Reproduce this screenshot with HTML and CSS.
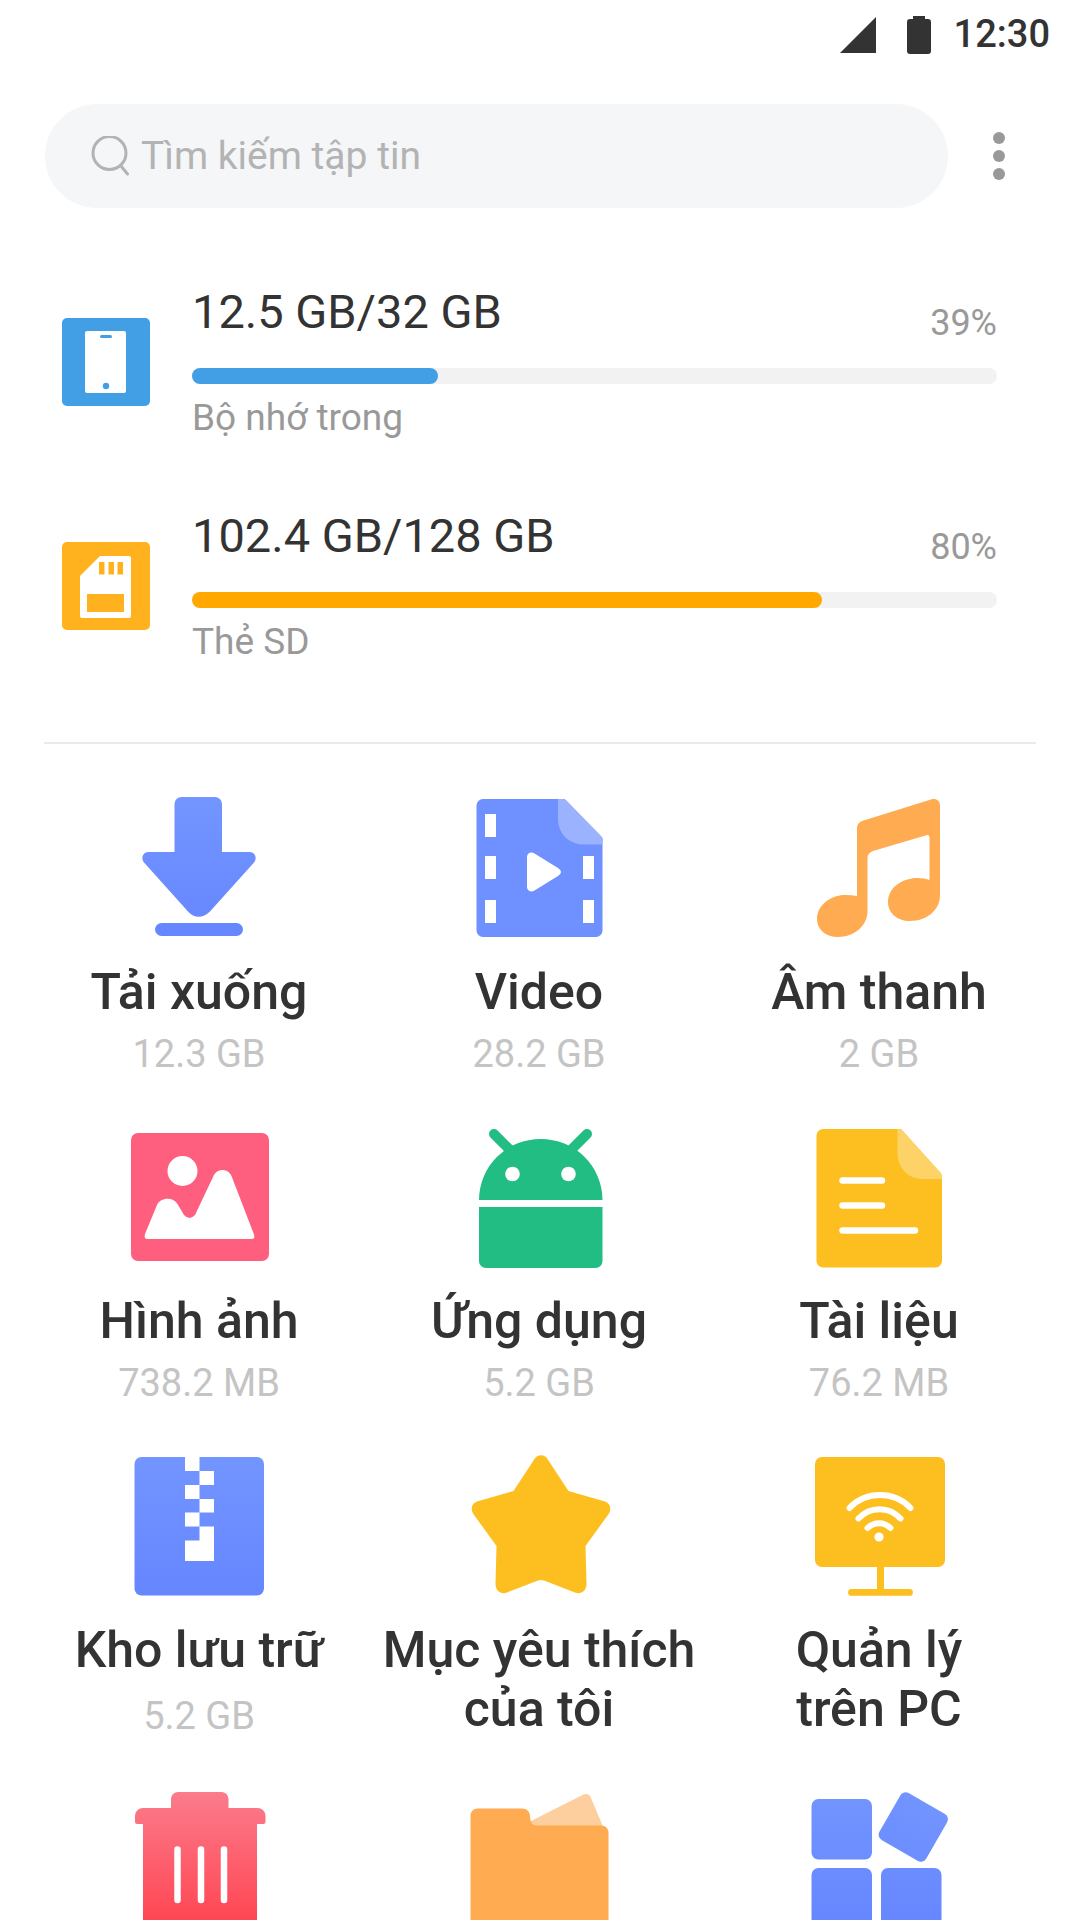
FILE: index.html
```html
<!DOCTYPE html>
<html lang="vi">
<head>
  <meta charset="utf-8">
  <meta name="viewport" content="width=device-width, initial-scale=1">
  <title>Quản lý tập tin</title>
  <link rel="stylesheet" href="styles.css">
</head>
<body>
  <div class="app">
    <div class="status-bar">
      <svg class="status-signal" viewBox="0 0 36 36" aria-hidden="true"><path d="M36 0V36H0z"/></svg>
      <svg class="status-battery" viewBox="0 0 24 40" aria-hidden="true"><path d="M6 1h12v3h3a3 3 0 0 1 3 3v29a3 3 0 0 1-3 3H3a3 3 0 0 1-3-3V7a3 3 0 0 1 3-3h3z"/></svg>
      <time class="status-time">12:30</time>
    </div>

    <header class="toolbar">
      <label class="search">
        <svg class="search-icon" viewBox="0 0 40 40" aria-hidden="true"><circle cx="18.500" cy="17" r="16.500"/><path d="M30 30l6.500 8"/></svg>
        <input class="search-input" type="search" placeholder="Tìm kiếm tập tin" aria-label="Tìm kiếm tập tin">
      </label>
      <button class="menu-button" type="button" aria-label="Menu">
        <svg class="menu-icon" viewBox="0 0 12 48" aria-hidden="true"><circle cx="6" cy="6" r="6"/><circle cx="6" cy="24" r="6"/><circle cx="6" cy="42" r="6"/></svg>
      </button>
    </header>

    <main>
      <section class="storage-list">
        <div class="storage">
          <svg class="storage-icon" viewBox="0 0 88 88" aria-hidden="true">
            <rect width="88" height="88" rx="5" fill="#429fe5"/>
            <rect x="23" y="13" width="41" height="62" rx="2" fill="#fff"/>
            <rect x="38" y="17" width="12" height="3" rx="1.5" fill="#429fe5"/>
            <circle cx="44" cy="68" r="3.2" fill="#429fe5"/>
          </svg>
          <div class="storage-body">
            <div class="storage-head">
              <span class="storage-usage">12.5 GB/32 GB</span>
              <span class="storage-percent">39%</span>
            </div>
            <div class="meter"><div class="meter-fill meter-fill-internal" style="width: 30.6%"></div></div>
            <div class="storage-name">Bộ nhớ trong</div>
          </div>
        </div>
        <div class="storage">
          <svg class="storage-icon" viewBox="0 0 88 88" aria-hidden="true">
            <rect width="88" height="88" rx="5" fill="#ffb21e"/>
            <path d="M38 14H67a2 2 0 0 1 2 2V74a2 2 0 0 1-2 2H20a2 2 0 0 1-2-2V34z" fill="#fff"/>
            <path d="M37 20h5.500v12.500H37zM46.500 20H52v12.500h-5.500zM55.500 20H61v12.500h-5.500zM25 52h37v18H25z" fill="#ffb21e"/>
          </svg>
          <div class="storage-body">
            <div class="storage-head">
              <span class="storage-usage">102.4 GB/128 GB</span>
              <span class="storage-percent">80%</span>
            </div>
            <div class="meter"><div class="meter-fill meter-fill-card" style="width: 78.2%"></div></div>
            <div class="storage-name">Thẻ SD</div>
          </div>
        </div>
      </section>

      <hr class="divider">

      <nav class="tiles">
        <a class="tile" href="#downloads">
          <svg class="tile-icon" viewBox="0 0 144 144" aria-hidden="true">
            <defs>
              <linearGradient id="blue" gradientUnits="userSpaceOnUse" x1="0" y1="4" x2="0" y2="142"><stop offset="0" stop-color="#7395ff"/><stop offset="1" stop-color="#6686ff"/></linearGradient>
              <linearGradient id="red" gradientUnits="userSpaceOnUse" x1="0" y1="5" x2="0" y2="134"><stop offset="0" stop-color="#fb7c8c"/><stop offset="1" stop-color="#ff4653"/></linearGradient>
            </defs>
            <path fill="url(#blue)" d="M54.500 2H88a7 7 0 0 1 7 7V57H122.500C128 57 130.500 63 127 67.500L83 116.500C76 123.500 67 123.500 61 116.500L17 67.500C13.500 63 16 57 21.500 57H47.500V9a7 7 0 0 1 7-7z"/>
            <rect fill="url(#blue)" x="28" y="128" width="88" height="13" rx="6.500"/>
          </svg>
          <span class="tile-name">Tải xuống</span>
          <span class="tile-size">12.3 GB</span>
        </a>
        <a class="tile" href="#video">
          <svg class="tile-icon" viewBox="0 0 144 144" aria-hidden="true">
            <path fill="#6f90ff" d="M16 4H97.500L135.500 43V135.500a6.500 6.500 0 0 1-6.500 6.500H16a6.500 6.500 0 0 1-6.500-6.500V10.500A6.500 6.500 0 0 1 16 4z"/>
            <path fill="#9bb2ff" d="M91 4H96Q98 4 99.500 5.500L134 41Q135.500 42.500 135.500 44V49.500H117C102 49.500 91 39 91 23z"/>
            <path fill="#fff" d="M18 19h11v23H18zM18 61h11v23H18zM18 105h11v23H18zM116 61h11v23H116zM116 105h11v23H116z"/>
            <path fill="#fff" d="M60 62C60 58 64 56.500 67.500 58.500L91 73Q97 77 91 81L67.500 95.500C64 97.500 60 96 60 92z"/>
          </svg>
          <span class="tile-name">Video</span>
          <span class="tile-size">28.2 GB</span>
        </a>
        <a class="tile" href="#audio">
          <svg class="tile-icon" viewBox="0 0 144 144" aria-hidden="true">
            <path fill="#ffab51" d="M50 33Q50 28 55 26L124 4.500C129 3 133 6 133 10.500V100C133 115 120 126 103 126C90 126 81 118 81 107C81 92 96 83 110 83Q118 83 122.500 85V43Q122.500 39 118.500 40.500L66 56Q60.500 58 60.500 63V116C60.500 131 47 142 31 142C18 142 10 134 10 124C10 110 24 100 38 100Q45 100 50 101z"/>
          </svg>
          <span class="tile-name">Âm thanh</span>
          <span class="tile-size">2 GB</span>
        </a>

        <a class="tile" href="#images">
          <svg class="tile-icon" viewBox="0 0 144 144" aria-hidden="true">
            <rect x="4" y="9" width="138" height="128" rx="7" fill="#ff5f7e"/>
            <circle cx="55.500" cy="47" r="15" fill="#fff"/>
            <path fill="#fff" d="M18 110L30 81C33.500 73 46 72.500 50.500 80L57 91Q62.500 97 68 91L86.500 52C90 44 101 44 104.500 52L127 110.500Q128.500 115 124.500 115H20.500Q16.500 115 18 110z"/>
          </svg>
          <span class="tile-name">Hình ảnh</span>
          <span class="tile-size">738.2 MB</span>
        </a>
        <a class="tile" href="#apps">
          <svg class="tile-icon" viewBox="0 0 144 144" aria-hidden="true">
            <path fill="none" stroke="#22bd83" stroke-width="10" stroke-linecap="round" d="M27 10L45 28M120 10L102 28"/>
            <path fill="#22bd83" d="M12 76A61.700 61 0 0 1 135.500 76zM12 83H135.500V137a7 7 0 0 1-7 7H19a7 7 0 0 1-7-7z"/>
            <circle cx="45.500" cy="50" r="7.300" fill="#fff"/><circle cx="101.500" cy="50" r="7.300" fill="#fff"/>
          </svg>
          <span class="tile-name">Ứng dụng</span>
          <span class="tile-size">5.2 GB</span>
        </a>
        <a class="tile" href="#documents">
          <svg class="tile-icon" viewBox="0 0 144 144" aria-hidden="true">
            <path fill="#fcbf1f" d="M16 5H94L135 51V137a6.500 6.500 0 0 1-6.500 6.500H16A6.500 6.500 0 0 1 9.500 137V11.500A6.500 6.500 0 0 1 16 5z"/>
            <path fill="#fdd368" d="M90.500 5H92Q94 5 96 7L134 49Q135 50 135 52V55H116C102 55 90.500 45 90.500 28z"/>
            <path fill="none" stroke="#fff" stroke-width="6.500" stroke-linecap="round" d="M35.500 56.500H75M35.500 81.500H75M35.500 106.500H108"/>
          </svg>
          <span class="tile-name">Tài liệu</span>
          <span class="tile-size">76.2 MB</span>
        </a>

        <a class="tile tile-loose" href="#archives">
          <svg class="tile-icon" viewBox="0 0 144 144" aria-hidden="true">
            <rect x="7.500" y="4" width="129.500" height="138.500" rx="7" fill="url(#blue)"/>
            <path fill="#fff" d="M58 4H72.500V18H58zM72.500 18H87V32H72.500zM58 32H72.500V46H58zM72.500 46H87V59.500H72.500zM58 59.500H72.500V73.500H58zM72.500 73.500H87V108H58V87.500H72.500z"/>
          </svg>
          <span class="tile-name">Kho lưu trữ</span>
          <span class="tile-size">5.2 GB</span>
        </a>
        <a class="tile" href="#favorites">
          <svg class="tile-icon" viewBox="0 0 144 144" aria-hidden="true">
            <path fill="#fcbf1f" d="M67.500 6C70 1 78 1 80.500 6L101.500 38L138 48.500C143.500 50.500 144.500 56 142 60.500L118.500 93L119.500 131C119.500 138 113.500 142 108 139.500L77 127.500Q74 126.500 71 127.500L40 139.500C34.500 142 28.500 138 28.500 131L29.500 93L6 60.500C3.500 56 4.500 50.500 10 48.500L46.500 38z"/>
          </svg>
          <span class="tile-name">Mục yêu thích<br>của tôi</span>
        </a>
        <a class="tile" href="#pc">
          <svg class="tile-icon" viewBox="0 0 144 144" aria-hidden="true">
            <rect x="8" y="4" width="130" height="110" rx="7" fill="#fcbf1f"/>
            <path fill="#fcbf1f" d="M70 112H77V136H102.500a3.400 3.400 0 0 1 0 6.800H44.500a3.400 3.400 0 0 1 0-6.800H70z"/>
            <path fill="none" stroke="#fff" stroke-width="6" stroke-linecap="round" d="M42.500 55C59 37.800 87 37.800 103.500 55M51.500 65.500C63 53 82 53 93.500 65.500M60.500 75C67 68.500 77 68.500 83.500 75"/>
            <circle cx="72" cy="84" r="4.600" fill="#fff"/>
          </svg>
          <span class="tile-name">Quản lý<br>trên PC</span>
        </a>

        <a class="tile" href="#trash" aria-label="Thùng rác">
          <svg class="tile-icon" viewBox="0 0 144 144" aria-hidden="true">
            <path fill="url(#red)" d="M51 5H94.500a7 7 0 0 1 7 7V21H130.500a8 8 0 0 1 8 8V34.500Q138.500 37 136 37H130V136a7 7 0 0 1-7 7H23a7 7 0 0 1-7-7V37H10.500Q8 37 8 34.500V29a8 8 0 0 1 8-8H44V12a7 7 0 0 1 7-7z"/>
            <path fill="none" stroke="#fff" stroke-width="6.500" stroke-linecap="round" d="M50.500 62.500V113M74 62.500V113M97 62.500V113"/>
          </svg>
        </a>
        <a class="tile" href="#folders" aria-label="Thư mục">
          <svg class="tile-icon" viewBox="0 0 144 144" aria-hidden="true">
            <path fill="#fdcf9f" d="M62 35L116.500 7.500Q122 5.500 124 11L137 42H64z"/>
            <path fill="#ffab51" d="M10.500 21.500H55C60 21.500 63 25 63 29Q63 38.500 70 38.500H134.500a7 7 0 0 1 7 7V136a7 7 0 0 1-7 7H10.500a7 7 0 0 1-7-7V28.500a7 7 0 0 1 7-7z"/>
          </svg>
        </a>
        <a class="tile" href="#more" aria-label="Thêm">
          <svg class="tile-icon" viewBox="0 0 144 144" aria-hidden="true">
            <g fill="url(#blue)">
              <rect x="4.500" y="12" width="60.500" height="60.500" rx="7"/>
              <rect x="4.500" y="81" width="60.500" height="60.500" rx="7"/>
              <rect x="74" y="81" width="60.500" height="60.500" rx="7"/>
              <rect x="79.300" y="13" width="54" height="54" rx="6" transform="rotate(30 106.300 40)"/>
            </g>
          </svg>
        </a>
      </nav>
    </main>
  </div>
</body>
</html>
```
FILE: styles.css
```css
* {
  box-sizing: border-box;
}

body {
  margin: 0;
  background: #fff;
  color: #333;
  font-family: Roboto, "Noto Sans", sans-serif;
}

.app {
  height: 100vh;
  overflow: hidden;
}

.status-bar {
  display: flex;
  align-items: center;
  justify-content: flex-end;
  padding: 11px 30px 0;
}

.status-signal {
  width: 36px;
  height: 36px;
  margin-right: 31px;
  fill: #333;
}

.status-battery {
  width: 24px;
  height: 40px;
  margin-right: 23px;
  fill: #333;
}

.status-time {
  font-size: 38px;
  font-weight: 500;
  line-height: 47px;
}

.toolbar {
  display: flex;
  align-items: center;
  gap: 27px;
  padding: 46px 57px 0 45px;
}

.search {
  display: flex;
  flex: 1;
  align-items: center;
  gap: 10px;
  height: 104px;
  padding: 0 46px;
  border-radius: 52px;
  background: #f5f6f8;
}

.search-icon {
  width: 40px;
  height: 40px;
  fill: none;
  stroke: #b3b3b3;
  stroke-width: 3;
  stroke-linecap: round;
}

.search-input {
  flex: 1;
  min-width: 0;
  padding: 0;
  border: 0;
  outline: 0;
  background: transparent;
  color: #333;
  font: inherit;
  font-size: 39px;
}

.search-input::placeholder {
  color: #b3b3b3;
}

.menu-button {
  display: flex;
  justify-content: center;
  width: 48px;
  padding: 0;
  border: 0;
  background: none;
}

.menu-icon {
  width: 12px;
  height: 48px;
  fill: #999;
}

.storage-list {
  display: grid;
  gap: 69px;
  padding: 76px 83px 79px 62px;
}

.storage {
  display: flex;
  align-items: center;
  gap: 42px;
}

.storage-icon {
  width: 88px;
  height: 88px;
}

.storage-body {
  flex: 1;
}

.storage-head {
  display: flex;
  align-items: flex-start;
  justify-content: space-between;
}

.storage-usage {
  font-size: 47px;
  line-height: 56px;
}

.storage-percent {
  padding-top: 18px;
  color: #999;
  font-size: 36px;
  line-height: 42px;
}

.meter {
  height: 16px;
  margin: 24px 0 13px;
  border-radius: 8px;
  background: #f2f2f2;
}

.meter-fill {
  height: 100%;
  border-radius: 8px;
}

.meter-fill-internal {
  background: #429fe5;
}

.meter-fill-card {
  background: #ffa800;
}

.storage-name {
  color: #999;
  font-size: 37px;
  line-height: 42px;
}

.divider {
  height: 2px;
  margin: 0 44px;
  border: 0;
  background: #ebebeb;
}

.tiles {
  display: grid;
  grid-template-columns: repeat(3, 1fr);
  gap: 48px 0;
  padding: 51px 31px 48px 29px;
}

.tile {
  display: flex;
  flex-direction: column;
  align-items: center;
  color: inherit;
  text-align: center;
  text-decoration: none;
}

.tile-icon {
  width: 144px;
  height: 144px;
  margin-bottom: 24px;
}

.tile-name {
  font-size: 50px;
  font-weight: 500;
  line-height: 59px;
  white-space: nowrap;
}

.tile-size {
  margin-top: 10px;
  color: #c4c4c4;
  font-size: 38px;
  line-height: 44px;
}

.tile-loose .tile-size {
  margin-top: 14px;
}
```
